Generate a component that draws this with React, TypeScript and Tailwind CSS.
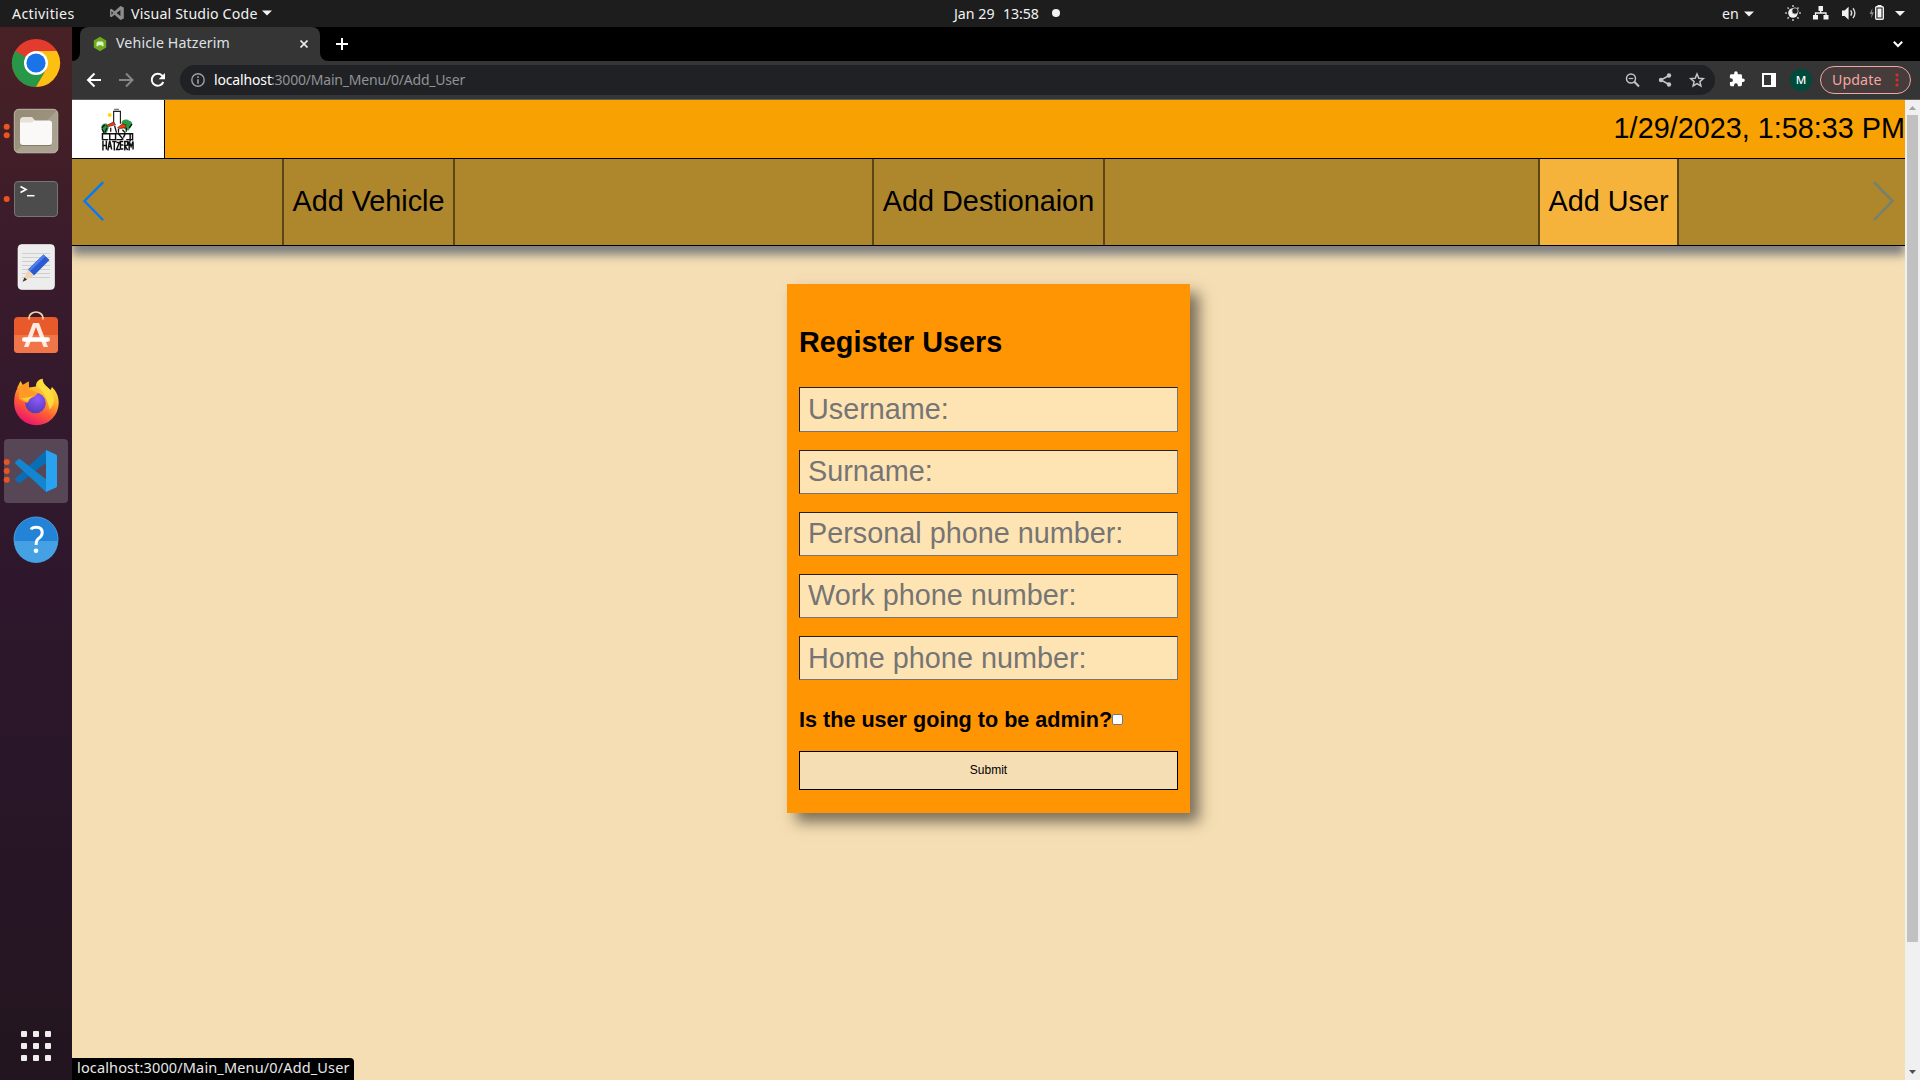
import React from 'react';

function Caret() {
  return (
    <svg width="10" height="6" viewBox="0 0 10 6" fill="#f2f2f2">
      <path d="M0 0.5h10L5 5.5z" />
    </svg>
  );
}

function SystemBar() {
  return (
    <div className="flex h-[27px] items-center bg-[#1d1d1d] font-['Noto_Sans',sans-serif] text-[14.200px] text-[#f2f2f2]">
      <div className="flex w-[954px] items-center">
        <span className="ml-[12px] w-[98px] whitespace-nowrap tracking-[0.350px]">Activities</span>
        <svg width="14" height="14" viewBox="0 0 14 14">
          <path fill="#8d8d8d" fillRule="evenodd" d="M10.4 0 13.8 1.5v11L10.4 14 4.6 8.8 1.4 11.2 0 10.4V3.6l1.4-.8 3.2 2.4zM10.4 4 6.6 7l3.8 3zM1.5 5.3v3.4L3.2 7z" />
        </svg>
        <span className="ml-[7px] mr-[5px] w-[126px] whitespace-nowrap tracking-[0.160px]">Visual Studio Code</span>
        <Caret />
      </div>
      <div className="flex w-[768px] items-center">
        <span className="w-[49px] whitespace-nowrap">Jan 29</span>
        <span className="w-[49px] whitespace-nowrap tracking-[-0.100px]">13:58</span>
        <span className="size-[8px] rounded-full bg-[#f2f2f2]" />
      </div>
      <span className="w-[22px]">en</span>
      <Caret />
      <svg width="136" height="27" viewBox="1769 0 136 27" className="ml-[15px]" fill="#f2f2f2">
        <g stroke="#b8b8b8" strokeWidth="1.6">
          <path d="M1793 5v2M1793 19v2M1785 13h2M1799 13h2M1787.5 7.5l1.3 1.3M1797.3 17.3l1.3 1.3M1787.5 18.6l1.3-1.3M1797.3 8.8l1.3-1.3" />
        </g>
        <circle cx="1793" cy="13" r="4.800" fill="#f2f2f2" />
        <circle cx="1795" cy="11" r="3.200" fill="#1d1d1d" stroke="#f2f2f2" strokeWidth=".7" />
        <path d="M1818.500 6h4.500v5h-4.500zM1813 15h5v4.500h-5zM1823.500 15h5v4.500h-5z" />
        <path d="M1820.700 10v3M1815.500 16v-3h10.500v3" fill="none" stroke="#f2f2f2" strokeWidth="1.300" />
        <path d="M1842 10.500h2.600l4-3.800v13l-4-3.800h-2.600z" />
        <path d="M1850.700 10.300q2 2.700 0 5.400M1853 8.300q3.800 4.900 0 9.800" fill="none" stroke="#d8d8d8" strokeWidth="1.400" />
        <path d="M1872.500 8l-3 6h2.200l-.9 4.500 3.200-6.200h-2z" fill="#8b8b8b" />
        <rect x="1875.700" y="6.700" width="7.600" height="12.600" rx="1" fill="none" stroke="#f2f2f2" strokeWidth="1.400" />
        <path d="M1877.500 5h4v1.500h-4zM1877.500 8.500h4v9h-4z" />
        <path d="M1895 11h10l-5 5z" />
      </svg>
    </div>
  );
}

function Dots({ ys }: { ys: number[] }) {
  return (
    <>
      {ys.map((y) => (
        <circle key={y} cx="6.700" cy={y} r="3" fill="#e95420" />
      ))}
    </>
  );
}

function Slot({ index, children }: { index: number; children: React.ReactNode }) {
  return (
    <svg width="72" height="68" viewBox={`0 ${29 + index * 68} 72 68`} className="block shrink-0">
      {children}
    </svg>
  );
}

function Dock() {
  return (
    <div className="flex w-[72px] shrink-0 flex-col bg-[linear-gradient(180deg,#49222090_0%,transparent_22%),linear-gradient(180deg,#45202a_0%,#3a1b2b_20%,#30182d_45%,#2b162a_65%,#22151f_100%)] pt-[2px]">
      <Slot index={0}>
        <circle cx="36" cy="63" r="24" fill="#e33b2e" />
        <path d="M36 63 15.200 51A24 24 0 0 0 36 87l10.400-18z" fill="#279847" />
        <path d="M36 51h20.800A24 24 0 0 1 36 87l10.400-18z" fill="#fcc013" />
        <circle cx="36" cy="63" r="12" fill="#fff" />
        <circle cx="36" cy="63" r="9.600" fill="#1a73e8" />
      </Slot>
      <Slot index={1}>
        <defs>
          <linearGradient id="files" x1="0" y1="0" x2="1" y2="1">
            <stop offset="0" stopColor="#958b76" />
            <stop offset=".5" stopColor="#9b927e" />
            <stop offset=".51" stopColor="#aaa290" />
            <stop offset="1" stopColor="#aaa290" />
          </linearGradient>
        </defs>
        <Dots ys={[126.700, 135.300]} />
        <rect x="14.300" y="109.300" width="43.500" height="43.500" rx="4.500" fill="url(#files)" stroke="#c0b9a8" strokeWidth="1" />
        <path d="M20 120.500a3.500 3.500 0 0 1 3.500-3.500h8.500l3.500 4v8H20z" fill="#e6e2da" />
        <path d="M20 122.500h12l3-2h14a3 3 0 0 1 3 3V142a3 3 0 0 1-3 3H23a3 3 0 0 1-3-3z" fill="#faf9f8" />
        <path d="M21 145.500h30" stroke="#857d6c" strokeWidth="1" />
      </Slot>
      <Slot index={2}>
        <Dots ys={[199]} />
        <rect x="14.500" y="181.500" width="43" height="35" rx="3.500" fill="#4c4c4c" stroke="#767676" strokeWidth="1" />
        <path d="M20.500 186.500l5.500 3-5.500 3" fill="none" stroke="#fff" strokeWidth="1.700" />
        <path d="M27 195.700h7.500" stroke="#fff" strokeWidth="1.500" />
      </Slot>
      <Slot index={3}>
        <rect x="18" y="244.500" width="36.500" height="45" rx="4" fill="#ededed" stroke="#fff" strokeWidth=".6" />
        <path d="M22 253.500h28M22 257.500h28M22 261.500h28M22 265.500h28M22 269.500h28M22 273.500h28M22 277.500h28" stroke="#cfcfcf" strokeWidth="1" />
        <path d="M43.500 254.500l6 5.500-15.500 15.500-6-6z" fill="#2a5bd0" />
        <path d="M43.500 254.500l2 1.800-15.800 15.500-1.700-2.300z" fill="#4d7df0" />
        <path d="M28 269.500l6 6-11 6z" fill="#f3d3b0" />
        <path d="M24.500 277.500l2.500 2.300-4.500 2z" fill="#333" />
      </Slot>
      <Slot index={4}>
        <rect x="14" y="317" width="44" height="36" rx="4" fill="#e95a2a" />
        <path d="M14 335h44v14a4 4 0 0 1-4 4H18a4 4 0 0 1-4-4z" fill="#f0764a" />
        <path d="M29 319.500v-1.500a7 6 0 0 1 14 0v1.500" fill="none" stroke="#f5d5a5" strokeWidth="1.700" />
        <path d="M33 323h6l9 24h-4.500L36 327l-7.500 20H24z" fill="#fbe9e2" />
        <rect x="22" y="337.200" width="28" height="4.600" rx="2.300" fill="#fff" />
      </Slot>
      <Slot index={5}>
        <defs>
          <linearGradient id="fox" x1=".8" y1="0" x2=".3" y2="1">
            <stop offset="0" stopColor="#fff04a" />
            <stop offset=".35" stopColor="#ffb52a" />
            <stop offset=".65" stopColor="#ff5a35" />
            <stop offset="1" stopColor="#e80e75" />
          </linearGradient>
          <radialGradient id="globe" cx=".6" cy=".3" r=".8">
            <stop offset="0" stopColor="#9059ff" />
            <stop offset="1" stopColor="#4a3aaf" />
          </radialGradient>
        </defs>
        <path d="M17 388l3.500-7 3.500 6 4.500-5.500.5 6 7-1c-.5-4 3-7.500 6.500-7.500 0 5.500 4.500 7.500 8 11l1.500-3c5 5 6.700 10 6.700 16a22.300 22.300 0 0 1-44.600 0c0-6 1-11 3.400-15z" fill="url(#fox)" />
        <path d="M38 386c0-4 2-6.500 4.500-7.500 0 6 5.500 8 9 13 4 6 3 14-2 18-2-10-5-16-11.500-23.500z" fill="#ffe040" opacity=".85" />
        <circle cx="35.500" cy="403" r="10.300" fill="url(#globe)" />
        <path d="M19 387l9.500-5.500.8 7.500 8 4c0 3-5 3.500-7 5.500-1.500 1.500-1 3-3.300 4.500L19 399z" fill="#ff9a26" />
        <path d="M20 398c4 1 9-2 15-1.500-4 .5-6 2.500-8 5z" fill="#ffcf35" />
      </Slot>
      <Slot index={6}>
        <rect x="4" y="439" width="64" height="64" rx="4" fill="#574655" />
        <Dots ys={[462, 471, 479.700]} />
        <path d="M46 450 15.500 478.300q-1 1 0 2l2.800 2.500q1 .8 2 0L47 462z" fill="#0a6db5" />
        <path d="M46 492 15.500 463.700q-1-1 0-2l2.800-2.500q1-.8 2 0L47 480z" fill="#1485cf" />
        <path d="M46 450l10 4.500q1 .6 1 1.500v30q0 1-1 1.500L46 492z" fill="#29a2f0" />
      </Slot>
      <Slot index={7}>
        <circle cx="36" cy="539" r="22" fill="#2383d6" stroke="#5cabe8" strokeWidth=".8" />
        <path d="M14 541a22 22 0 0 0 44 0z" fill="#45a0e4" />
        <path d="M31 529.500q1-2.300 5.500-2.300 5.700 0 5.700 5.300 0 3.500-3.300 5.700-2.700 2-2.700 5.300v1.500" fill="none" stroke="#fff" strokeWidth="2.900" />
        <circle cx="36" cy="550.700" r="2.300" fill="#fff" />
      </Slot>
      <div className="mt-auto mb-[19px] ml-[21px] grid w-[30px] grid-cols-3 gap-[6px]">
        {Array.from({ length: 9 }, (_, i) => (
          <span key={i} className="size-[6px] rounded-[1px] bg-[#f0eeec]" />
        ))}
      </div>
    </div>
  );
}

function TabStrip() {
  return (
    <div className="flex h-[34px] bg-black">
      <div className="flex w-[8px] items-end">
        <div className="size-[8px] bg-[#353535]">
          <div className="size-[8px] rounded-br-[8px] bg-black" />
        </div>
      </div>
      <div className="flex w-[240px] items-center rounded-t-[8px] bg-[#353535]">
        <svg width="14" height="16" viewBox="0 0 14 16" className="ml-[13px]">
          <path d="M7 .8l6.200 3.600v7.200L7 15.200.8 11.600V4.400z" fill="#6cac1c" />
          <path d="M3.500 6.800 4.800 5.500h4.400l1.300 1.300v3.400h-1.300l-.6-1H5.400l-.6 1H3.500z" fill="#e4f0d4" />
        </svg>
        <span className="ml-[9px] w-[184px] pb-[2px] font-['Noto_Sans',sans-serif] text-[14.200px] tracking-[0.130px] whitespace-nowrap text-[#dfe1e5]">Vehicle Hatzerim</span>
        <svg width="8" height="8" viewBox="0 0 8 8" stroke="#e8e8e8" strokeWidth="1.700">
          <path d="M.5.5l7 7M7.500.5l-7 7" />
        </svg>
      </div>
      <div className="flex w-[8px] items-end">
        <div className="size-[8px] bg-[#353535]">
          <div className="size-[8px] rounded-bl-[8px] bg-black" />
        </div>
      </div>
      <svg width="12" height="12" viewBox="0 0 12 12" className="mt-[11px] ml-[8px]" stroke="#fff" strokeWidth="2">
        <path d="M6 0v12M0 6h12" />
      </svg>
      <svg width="10" height="7" viewBox="0 0 10 7" className="mt-[14px] mr-[17px] ml-auto" fill="none" stroke="#fff" strokeWidth="2">
        <path d="M.8.8 5 5 9.200.8" />
      </svg>
    </div>
  );
}

function Toolbar() {
  return (
    <div className="flex h-[39px] items-center border-b border-[#5c5c5c] bg-[#353535]">
      <svg width="108" height="38" viewBox="72 61 108 38" fill="none" strokeWidth="2">
        <path d="M101 80H88.500M94.500 73.500 88 80l6.500 6.500" stroke="#fff" />
        <path d="M119 80h12.500M126 73.500l6.500 6.500-6.500 6.500" stroke="#868686" />
        <path d="M163.300 82A6 6 0 1 1 162 75.500l2 2" stroke="#fff" />
        <path d="M165 73v6.300h-6.300z" fill="#fff" />
      </svg>
      <div className="flex h-[30px] w-[1535px] items-center rounded-full bg-[#202124]">
        <svg width="14" height="14" viewBox="0 0 14 14" className="ml-[11px]" fill="none" stroke="#9aa0a6" strokeWidth="1.400">
          <circle cx="7" cy="7" r="6.200" />
          <path d="M7 3.300v1.600M7 6.300v4.400" strokeWidth="1.600" />
        </svg>
        <span className="ml-[9px] w-[57px] pb-px font-['Noto_Sans',sans-serif] text-[14px] tracking-[-0.150px] whitespace-nowrap text-white">localhost</span>
        <span className="pb-px font-['Noto_Sans',sans-serif] text-[14px] tracking-[-0.200px] whitespace-nowrap text-[#8f9396]">:3000/Main_Menu/0/Add_User</span>
        <svg width="86" height="20" viewBox="1624 70 86 20" className="mr-[5px] ml-auto" fill="none" stroke="#c2c4c6" strokeWidth="1.500">
          <circle cx="1631" cy="78.500" r="4.500" />
          <path d="M1634.300 81.800l4.700 4.700" strokeWidth="2" />
          <path d="M1628.700 78.500h4.600" strokeWidth="1.200" />
          <path d="M1669 75.500l-8 4.500 8 4.500" />
          <g fill="#c2c4c6" stroke="none">
            <circle cx="1669" cy="75.500" r="2.200" />
            <circle cx="1661" cy="80" r="2.200" />
            <circle cx="1669" cy="84.500" r="2.200" />
          </g>
          <path d="M1697 74l1.800 4.200 4.500.4-3.400 3 1 4.400-3.900-2.400-3.900 2.400 1-4.400-3.400-3 4.500-.4z" />
        </svg>
      </div>
      <svg width="66" height="24" viewBox="1722 68 66 24" className="ml-[7px]">
        <path fill="#fff" transform="translate(1728.500 72) scale(.71)" d="M20.500 9H19V5c0-1.100-.9-2-2-2h-4V1.500a2.500 2.500 0 0 0-5 0V3H4C2.900 3 2 3.900 2 5v3.800h1.500a2.700 2.700 0 0 1 0 5.400H2V18c0 1.100.9 2 2 2h3.800v-1.500a2.700 2.700 0 0 1 5.400 0V20H17c1.100 0 2-.9 2-2v-4h1.500a2.500 2.500 0 0 0 0-5z" />
        <path fill="#fff" fillRule="evenodd" d="M1762 73h14v14h-14zM1764 75v10h7V75z" />
      </svg>
      <span className="ml-[2px] flex size-[22px] items-center justify-center rounded-full bg-[#00493d] font-['Noto_Sans',sans-serif] text-[11.500px] font-medium text-white">M</span>
      <div className="ml-[8px] flex h-[28px] w-[91px] items-center rounded-full border border-[#f0a8a2] bg-[#463c3c]">
        <span className="ml-[11px] w-[63px] pb-px font-['Noto_Sans',sans-serif] text-[14.200px] tracking-[0.100px] text-[#f0a8a2]">Update</span>
        <svg width="4" height="14" viewBox="0 0 4 14" fill="#d93025">
          <circle cx="2" cy="2" r="1.600" />
          <circle cx="2" cy="7" r="1.600" />
          <circle cx="2" cy="12" r="1.600" />
        </svg>
      </div>
    </div>
  );
}

function Logo() {
  return (
    <svg width="34" height="43" viewBox="0 0 35 43.500" preserveAspectRatio="none">
      <path d="M13 16V3.500h7V16" fill="#fff" stroke="#222" strokeWidth="1.200" />
      <path d="M13.500 1.500h5" stroke="#777" strokeWidth="1.500" />
      <circle cx="9" cy="7" r="2" fill="#ffd800" />
      <path d="M1 22c-2-4 1-7 5-6l2 4-2 5H2z" fill="#2a9c46" />
      <path d="M21 15c1-4 6-4 8-2 3 0 4 4 2 6l-3 4-4-2z" fill="#2a9c46" />
      <path d="M1 20l3-3M29 20l3-4M3 25l-2-4" stroke="#111" strokeWidth="1.300" />
      <path d="M5 18l8-4 2 3-8 2z" fill="#f03a10" stroke="#111" strokeWidth=".5" />
      <path d="M17 20l5-4 4 1-1 3-6 1z" fill="#f03a10" stroke="#111" strokeWidth=".5" />
      <path d="M4 25l2-5M14 18l2 7M18 21v4M26 20v4M10 20v4M22 22l3 3" fill="none" stroke="#111" strokeWidth="1.300" />
      <path d="M1.500 32v-6h31v7M1.500 32h6M9 26v6h6v-6M16 32h6M18 26l5 6M25 26l-2 4M26 32h7M30 26v8" fill="none" stroke="#111" strokeWidth="1.500" />
      <path d="M2 33v10M5.500 33v9M2 38h3.500M7 43l2-10 2 9M8 39h3M11.500 34h4.500M13.700 34v9M16 35h3l-3 7h3.500M23 34h-3v7.500h3M20 37.500h3M24.500 43v-9h3v3.500l-3 1 3 4M29 43v-9l2 5 2-5v8" fill="none" stroke="#111" strokeWidth="1.500" />
    </svg>
  );
}

const tabs = ['Add Vehicle', 'Add Destionaion', 'Add User'];

function Nav() {
  return (
    <div className="relative grid h-[87px] shrink-0 grid-cols-3 justify-items-center gap-[27px] border-b border-black bg-[#ae862b] shadow-[0_9px_9px_#808080]">
      {tabs.map((t) => (
        <div
          key={t}
          className={
            'flex items-center border-x-2 border-[#5b4616] px-[8.500px] text-[28.800px] whitespace-nowrap ' +
            (t === 'Add User' ? 'bg-[#f6b33c]' : '')
          }
        >
          {t}
        </div>
      ))}
      <svg width="24" height="44" viewBox="0 0 24 44" className="absolute top-[21px] left-[10px]" fill="none" stroke="#007aff" strokeWidth="2.400" strokeLinecap="round">
        <path d="M20.500 2.800 2.500 21 20.500 39.500" />
      </svg>
      <svg width="24" height="44" viewBox="0 0 24 44" className="absolute top-[21px] right-[10px] opacity-35" fill="none" stroke="#007aff" strokeWidth="2.400" strokeLinecap="round">
        <path d="M3.500 2.800 21.500 21 3.500 39.500" />
      </svg>
    </div>
  );
}

const fields = [
  { label: 'Username:', box: 'h-[45px]' },
  { label: 'Surname:', box: 'h-[44px] pb-[2px]' },
  { label: 'Personal phone number:', box: 'h-[44px] pb-[2px]' },
  { label: 'Work phone number:', box: 'h-[44px] pb-[2px]' },
  { label: 'Home phone number:', box: 'h-[44px]' },
];

function RegisterForm() {
  return (
    <form className="mt-[38px] ml-[715px] flex h-[529px] w-[403px] flex-col bg-[#ff9503] px-[12px] shadow-[9px_9px_13.500px_rgba(0,0,0,0.5)]">
      <h2 className="mt-[42px] text-[28.800px] leading-[33px] font-bold">Register Users</h2>
      <div className="mt-[28px] flex flex-col gap-[18px]">
        {fields.map((f) => (
          <input
            key={f.label}
            placeholder={f.label}
            className={
              'w-full border border-t-[#222] border-r-[#767676] border-b-[#767676] border-l-[#222] bg-[#ffe4b3] px-[8px] text-[28.800px] placeholder:text-[#757575] placeholder:opacity-100 ' +
              f.box
            }
          />
        ))}
      </div>
      <div className="mt-[28px] flex h-[25px] items-center text-[21.600px] font-bold whitespace-nowrap">
        Is the user going to be admin?
        <span className="-mt-[2px] size-[11px] rounded-[2px] border border-[#767676] bg-white" />
      </div>
      <button type="button" className="mt-[18px] h-[39px] w-full border border-black bg-[#f5deb3] pb-[2px] text-[12px]">
        Submit
      </button>
    </form>
  );
}

function Page() {
  return (
    <div className="flex min-h-0 flex-1">
      <main className="relative flex w-[1833px] flex-col overflow-hidden bg-[#f5deb3] font-['Liberation_Sans',sans-serif] text-black">
        <header className="relative z-10 flex h-[59px] shrink-0 border-b border-black bg-[#f8a102]">
          <div className="flex w-[93px] items-center justify-center border-r border-black bg-white">
            <Logo />
          </div>
          <div className="ml-auto flex items-center text-[28.800px]">1/29/2023, 1:58:33 PM</div>
        </header>
        <Nav />
        <RegisterForm />
        <div className="absolute bottom-0 left-0 flex h-[22px] w-[282px] items-center rounded-tr-[4px] bg-black pb-[2px] pl-[5px] font-['Noto_Sans',sans-serif] text-[14.500px] tracking-[0.140px] whitespace-nowrap text-[#e8e8e8]">
          localhost:3000/Main_Menu/0/Add_User
        </div>
      </main>
      <div className="flex w-[15px] flex-col items-center bg-[#f0f0f0]">
        <svg width="7" height="4" viewBox="0 0 7 4" className="mt-[6px] mb-[5px]" fill="#a3a3a3">
          <path d="M3.500 0 7 4H0z" />
        </svg>
        <div className="h-[827px] w-[11px] bg-[#c1c1c1]" />
        <svg width="7" height="4" viewBox="0 0 7 4" className="mt-auto mb-[6px]" fill="#505050">
          <path d="M3.500 4 0 0h7z" />
        </svg>
      </div>
    </div>
  );
}

export default function App() {
  return (
    <div className="flex h-[1080px] w-[1920px] flex-col overflow-hidden">
      <SystemBar />
      <div className="flex min-h-0 flex-1">
        <Dock />
        <div className="flex min-w-0 flex-1 flex-col">
          <TabStrip />
          <Toolbar />
          <Page />
        </div>
      </div>
    </div>
  );
}
